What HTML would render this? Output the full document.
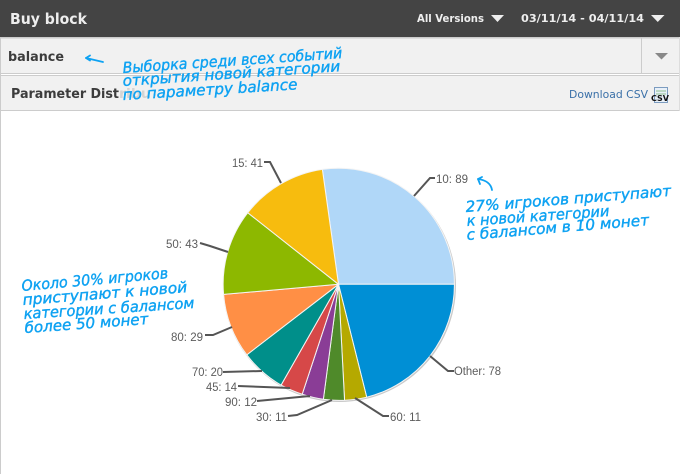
<!DOCTYPE html>
<html><head><meta charset="utf-8"><style>
html,body{margin:0;padding:0;background:#fff;width:680px;height:474px;overflow:hidden}
svg{display:block}
.h{font-family:"DejaVu Sans",sans-serif;font-weight:bold}
.l{font-family:"Liberation Sans",sans-serif;font-size:11.500px;fill:#5c5c5c}
.a{font-family:"DejaVu Sans",sans-serif;font-style:oblique;font-size:15px;fill:#0ea2f2;stroke:#0ea2f2;stroke-width:.4px}
</style></head><body>
<svg width="680" height="474" viewBox="0 0 680 474" xmlns="http://www.w3.org/2000/svg">
<rect width="680" height="474" fill="#fff"/>
<rect width="680" height="37" fill="#444"/>
<rect y="37" width="680" height="37" fill="#f1f1f1"/>
<rect y="75" width="680" height="36" fill="#f1f1f1"/>
<rect y="37" width="680" height="1.500" fill="#ccc"/>
<rect y="73" width="680" height="1" fill="#ccc"/>
<rect y="75" width="680" height="1" fill="#ccc"/>
<rect y="110" width="680" height="1" fill="#ccc"/>
<rect y="37" x="0" width="1" height="437" fill="#ccc"/>
<rect y="37" x="679" width="1" height="74" fill="#ddd"/>
<rect x="641" y="38" width="1" height="35" fill="#ccc"/>

<text class="h" x="10" y="24" font-size="15" fill="#eee" textLength="77" lengthAdjust="spacingAndGlyphs">Buy block</text>
<text class="h" x="417" y="22" font-size="11" fill="#eee" textLength="67" lengthAdjust="spacingAndGlyphs">All Versions</text>
<path d="M491 15h13l-6.500 7z" fill="#eee"/>
<text class="h" x="521" y="22" font-size="11" fill="#eee" textLength="123" lengthAdjust="spacingAndGlyphs">03/11/14 - 04/11/14</text>
<path d="M651 15h13.500l-6.750 7z" fill="#eee"/>
<path d="M655 53h13l-6.500 6.500z" fill="#888"/>

<text class="h" x="8" y="61" font-size="13" fill="#3c3c3c" textLength="56" lengthAdjust="spacingAndGlyphs">balance</text>
<text class="h" x="11" y="98" font-size="13" fill="#3c3c3c" textLength="108" lengthAdjust="spacingAndGlyphs">Parameter Dist</text>
<text class="h" x="119" y="98" font-size="13" fill="#d4d4d4" textLength="32" lengthAdjust="spacingAndGlyphs">ribu</text>
<text x="569" y="98" font-family="'DejaVu Sans',sans-serif" font-size="10.500" fill="#3a70a8" textLength="79" lengthAdjust="spacingAndGlyphs">Download CSV</text>
<rect x="654.500" y="87.500" width="13" height="15" fill="#e8f0f8" stroke="#7c9cc0"/>
<path d="M656 91h10M656 94h10" stroke="#8fc08f" stroke-width="1"/>
<text x="651" y="101" font-family="'DejaVu Sans',sans-serif" font-weight="bold" font-size="8" fill="#111" textLength="18" lengthAdjust="spacingAndGlyphs">CSV</text>

<!-- pie -->
<circle cx="339.500" cy="285.500" r="116.500" fill="#c9c9c9"/>
<g stroke="#f4f4f4" stroke-width="1" stroke-linejoin="round" transform="translate(338.500 284.300) scale(1.008) translate(-338 -284)">
<path d="M338 284L322 170A115 115 0 0 1 453 284Z" fill="#b0d7f8"/>
<path d="M338 284L453 284A115 115 0 0 1 366 396Z" fill="#008fd5"/>
<path d="M338 284L366 396A115 115 0 0 1 344 399Z" fill="#b5a900"/>
<path d="M338 284L344 399A115 115 0 0 1 323 398Z" fill="#4f8a2a"/>
<path d="M338 284L323 398A115 115 0 0 1 302 393Z" fill="#8a3d96"/>
<path d="M338 284L302 393A115 115 0 0 1 281 384Z" fill="#d64848"/>
<path d="M338 284L281 384A115 115 0 0 1 247 354Z" fill="#008f8a"/>
<path d="M338 284L247 354A115 115 0 0 1 224 294Z" fill="#ff8f45"/>
<path d="M338 284L224 294A115 115 0 0 1 248 213Z" fill="#8db800"/>
<path d="M338 284L248 213A115 115 0 0 1 322 170Z" fill="#f7bc0e"/>
</g>

<!-- leaders -->
<g fill="none" stroke="#555" stroke-width="2">
<path d="M414 196L430 178H435"/>
<path d="M281 183L270 162H264"/>
<path d="M228 252L210 246L200 243"/>
<path d="M232 327L213 335H205"/>
<path d="M262 371L223 372"/>
<path d="M290 388L238 386"/>
<path d="M310 396L257 401"/>
<path d="M332 400L297 415L288 416"/>
<path d="M355 398L383 416H389"/>
<path d="M430 356L448 371H454"/>
</g>
<text class="l" x="436" y="183" textLength="32" lengthAdjust="spacingAndGlyphs">10: 89</text>
<text class="l" x="232" y="167" textLength="31" lengthAdjust="spacingAndGlyphs">15: 41</text>
<text class="l" x="166" y="248" textLength="32" lengthAdjust="spacingAndGlyphs">50: 43</text>
<text class="l" x="171" y="341" textLength="32" lengthAdjust="spacingAndGlyphs">80: 29</text>
<text class="l" x="192" y="376" textLength="31" lengthAdjust="spacingAndGlyphs">70: 20</text>
<text class="l" x="206" y="391" textLength="31" lengthAdjust="spacingAndGlyphs">45: 14</text>
<text class="l" x="225" y="406" textLength="32" lengthAdjust="spacingAndGlyphs">90: 12</text>
<text class="l" x="256" y="421" textLength="31" lengthAdjust="spacingAndGlyphs">30: 11</text>
<text class="l" x="390" y="421" textLength="31" lengthAdjust="spacingAndGlyphs">60: 11</text>
<text class="l" x="454" y="375" textLength="47" lengthAdjust="spacingAndGlyphs">Other: 78</text>

<!-- annotations -->
<text class="a" transform="translate(123 73) rotate(-3.900)" textLength="220" lengthAdjust="spacingAndGlyphs">Выборка среди всех событий</text>
<text class="a" transform="translate(123 86) rotate(-3.900)" textLength="218" lengthAdjust="spacingAndGlyphs">открытия новой категории</text>
<text class="a" transform="translate(123 100) rotate(-3.500)" textLength="175" lengthAdjust="spacingAndGlyphs">по параметру balance</text>

<text class="a" transform="translate(22 291) rotate(-5)" textLength="147" lengthAdjust="spacingAndGlyphs">Около 30% игроков</text>
<text class="a" transform="translate(23 305) rotate(-4.500)" textLength="165" lengthAdjust="spacingAndGlyphs">приступают к новой</text>
<text class="a" transform="translate(24 319) rotate(-3.700)" textLength="171" lengthAdjust="spacingAndGlyphs">категории с балансом</text>
<text class="a" transform="translate(25 333) rotate(-4.200)" textLength="124" lengthAdjust="spacingAndGlyphs">более 50 монет</text>

<text class="a" transform="translate(466 212) rotate(-4.500)" textLength="206" lengthAdjust="spacingAndGlyphs">27% игроков приступают</text>
<text class="a" transform="translate(467 226) rotate(-4)" textLength="143" lengthAdjust="spacingAndGlyphs">к новой категории</text>
<text class="a" transform="translate(467 240) rotate(-4.700)" textLength="183" lengthAdjust="spacingAndGlyphs">с балансом в 10 монет</text>

<g fill="none" stroke="#0ea2f2" stroke-width="1.800" stroke-linecap="round" stroke-linejoin="round">
<path d="M86 58L103 62"/>
<path d="M90 55.500L86 58L90 60.500"/>
<path d="M492 190C491 184 486 180 478 179"/>
<path d="M482 177L478 179L480 184"/>
</g>
</svg>
</body></html>
